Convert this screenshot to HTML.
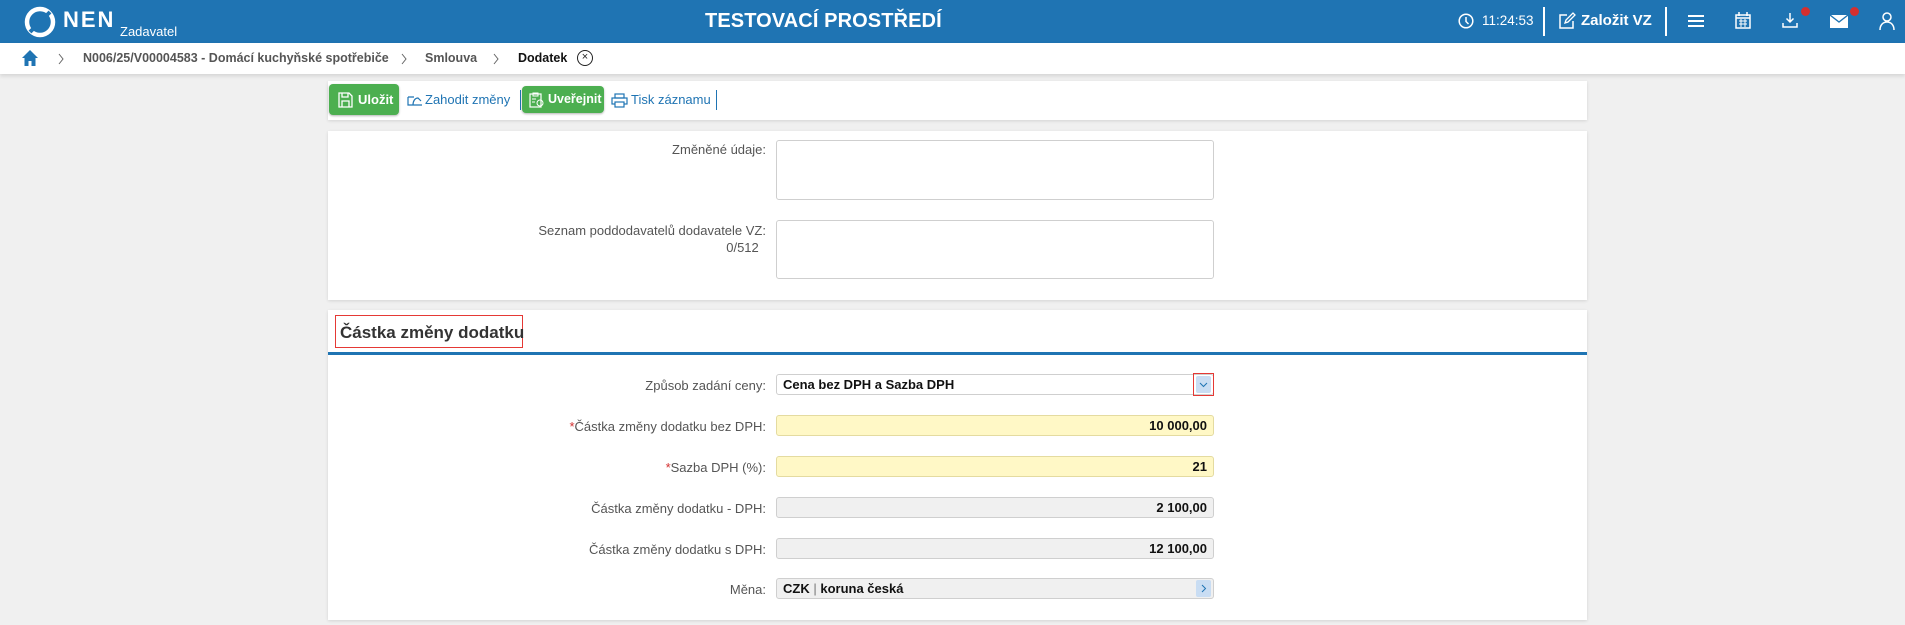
<!DOCTYPE html>
<html><head><meta charset="utf-8"><style>
*{box-sizing:border-box;margin:0;padding:0}
body{width:1905px;height:625px;overflow:hidden;background:#f0f0f0;font-family:"Liberation Sans",sans-serif;position:relative}
.abs{position:absolute;white-space:nowrap}
.hdr{left:0;top:0;width:1905px;height:43px;background:#1f74b3;color:#fff}
.bc{left:0;top:43px;width:1905px;height:31px;background:#fff;box-shadow:0 2px 4px rgba(0,0,0,.12);font-size:12.5px;font-weight:bold;color:#555}
.panel{background:#fff;box-shadow:0 1px 3px rgba(0,0,0,.12)}
.lbl{font-size:13px;color:#555;text-align:right;width:500px}
.inp{left:776px;width:438px;height:21px;border:1px solid #cfcfcf;border-radius:3px;font-size:13px;color:#111;padding:3px 6px;line-height:13px}
.y{background:#fff8c6;border-color:#e4dba0;text-align:right;font-weight:bold}
.g{background:#f0f0f0;text-align:right;font-weight:bold}
.btn{background:#4caf50;color:#fff;border-radius:4px;font-size:13px;font-weight:bold;box-shadow:0 1px 2px rgba(0,0,0,.3)}
.lnk{color:#1f74b3;font-size:13px}
.star{color:#d32f2f}
</style></head><body>
<div class="abs hdr">
  <svg class="abs" style="left:24px;top:6px" width="32" height="32" viewBox="0 0 32 32"><circle cx="16" cy="16" r="13" fill="none" stroke="#fff" stroke-width="4.5"/><path d="M6 26 L26 6" stroke="#1f74b3" stroke-width="4"/></svg>
  <div class="abs" style="left:63px;top:7px;font-size:22px;font-weight:bold;letter-spacing:2px">NEN</div>
  <div class="abs" style="left:120px;top:24px;font-size:13px">Zadavatel</div>
  <div class="abs" style="left:705px;top:10px;font-size:20px;font-weight:bold;letter-spacing:.1px">TESTOVACÍ PROSTŘEDÍ</div>
  <svg class="abs" style="left:1458px;top:13px" width="16" height="16" viewBox="0 0 16 16"><circle cx="8" cy="8" r="6.8" fill="none" stroke="#fff" stroke-width="1.5"/><path d="M8 4v4.5l2.5 2.5" fill="none" stroke="#fff" stroke-width="1.5"/></svg>
  <div class="abs" style="left:1482px;top:13px;font-size:13.5px">11:24:53</div>
  <div class="abs" style="left:1543px;top:7px;width:2px;height:29px;background:#fff"></div>
  <svg class="abs" style="left:1558px;top:12px" width="18" height="18" viewBox="0 0 18 18"><path d="M9 3H2v13h13V9" fill="none" stroke="#fff" stroke-width="1.5"/><path d="M7 11l1-3 7-7 2 2-7 7z" fill="none" stroke="#fff" stroke-width="1.3"/></svg>
  <div class="abs" style="left:1581px;top:12px;font-size:15px;font-weight:bold">Založit VZ</div>
  <div class="abs" style="left:1665px;top:7px;width:2px;height:29px;background:#fff"></div>
  <svg class="abs" style="left:1688px;top:14px" width="16" height="14"><path d="M0 2h16M0 7h16M0 12h16" stroke="#fff" stroke-width="2"/></svg>
  <svg class="abs" style="left:1735px;top:12px" width="16" height="17" viewBox="0 0 16 17"><rect x="1" y="3" width="14" height="13" fill="none" stroke="#fff" stroke-width="1.5"/><path d="M4 0v4M12 0v4M1 6h14" stroke="#fff" stroke-width="1.5"/><path d="M4 9h8M4 12h8M6 7v8M10 7v8" stroke="#fff" stroke-width="1"/></svg>
  <svg class="abs" style="left:1782px;top:12px" width="16" height="17" viewBox="0 0 16 17"><path d="M8 1v9M4.5 6.5 8 10l3.5-3.5" fill="none" stroke="#fff" stroke-width="1.5"/><path d="M1 11v4h14v-4" fill="none" stroke="#fff" stroke-width="1.5"/></svg>
  <div class="abs" style="left:1801px;top:7px;width:9px;height:9px;border-radius:50%;background:#d32f2f"></div>
  <svg class="abs" style="left:1830px;top:15px" width="18" height="13" viewBox="0 0 18 13"><rect width="18" height="13" fill="#fff"/><path d="M0 0l9 7 9-7" fill="none" stroke="#1f74b3" stroke-width="1.3"/></svg>
  <div class="abs" style="left:1850px;top:7px;width:9px;height:9px;border-radius:50%;background:#d32f2f"></div>
  <svg class="abs" style="left:1879px;top:12px" width="16" height="18" viewBox="0 0 16 18"><circle cx="8" cy="5" r="4" fill="none" stroke="#fff" stroke-width="1.5"/><path d="M1 18c0-5 3-8 7-8s7 3 7 8" fill="none" stroke="#fff" stroke-width="1.5"/></svg>
</div>
<div class="abs bc">
  <svg class="abs" style="left:21px;top:6px" width="18" height="17" viewBox="0 0 18 17"><path d="M9 1 1 9h2.5v8h4v-5h3v5h4V9H17z" fill="#1f74b3"/></svg>
  <svg class="abs" style="left:58px;top:10px" width="6" height="12"><path d="M1 1l4 5-4 5" fill="none" stroke="#666" stroke-width="1"/></svg>
  <div class="abs" style="left:83px;top:8px">N006/25/V00004583 - Domácí kuchyňské spotřebiče</div>
  <svg class="abs" style="left:401px;top:10px" width="6" height="12"><path d="M1 1l4 5-4 5" fill="none" stroke="#666" stroke-width="1"/></svg>
  <div class="abs" style="left:425px;top:8px">Smlouva</div>
  <svg class="abs" style="left:493px;top:10px" width="6" height="12"><path d="M1 1l4 5-4 5" fill="none" stroke="#666" stroke-width="1"/></svg>
  <div class="abs" style="left:518px;top:8px;color:#111">Dodatek</div>
  <div class="abs" style="left:577px;top:7px;width:16px;height:16px;border:1.3px solid #222;border-radius:50%;font-size:11px;line-height:13px;text-align:center;color:#222;font-weight:normal">×</div>
</div>
<div class="abs panel" style="left:328px;top:81px;width:1259px;height:39px">
  <div class="abs btn" style="left:1px;top:3px;width:70px;height:31px;padding:8px 0 0 29px">Uložit</div>
  <svg class="abs" style="left:10px;top:11px" width="15" height="16" viewBox="0 0 15 16"><path d="M1 1h10l3 3v11H1z M4 1v4h6V1 M4 15v-6h7v6" fill="none" stroke="#fff" stroke-width="1.3"/></svg>
  <svg class="abs" style="left:79px;top:13px" width="16" height="12" viewBox="0 0 16 12"><path d="M1 3v8h14 M1 3h6 M6 11c0-4 2-7 5-7l3 3" fill="none" stroke="#1f74b3" stroke-width="1.2"/></svg>
  <div class="abs lnk" style="left:97px;top:11px">Zahodit změny</div>
  <div class="abs" style="left:192px;top:9px;width:1px;height:20px;background:#1f74b3"></div>
  <div class="abs btn" style="left:194px;top:5px;width:82px;height:27px;padding:6px 0 0 26px;font-size:12.5px">Uveřejnit</div>
  <svg class="abs" style="left:201px;top:11px" width="15" height="16" viewBox="0 0 15 16"><rect x="1" y="2" width="11" height="13" fill="none" stroke="#fff" stroke-width="1.2"/><path d="M4 1h5v3H4z M3 7h4M3 10h3" stroke="#fff" fill="none"/><circle cx="11" cy="11" r="3" fill="none" stroke="#fff"/></svg>
  <svg class="abs" style="left:283px;top:12px" width="17" height="15" viewBox="0 0 17 15"><rect x="4" y="1" width="9" height="4" fill="none" stroke="#1f74b3" stroke-width="1.2"/><rect x="1" y="5" width="15" height="6" fill="none" stroke="#1f74b3" stroke-width="1.2"/><rect x="4" y="9" width="9" height="5" fill="#fff" stroke="#1f74b3" stroke-width="1.2"/></svg>
  <div class="abs lnk" style="left:303px;top:11px">Tisk záznamu</div>
  <div class="abs" style="left:388px;top:9px;width:1px;height:20px;background:#1f74b3"></div>
</div>
<div class="abs panel" style="left:328px;top:131px;width:1259px;height:169px"></div>
<div class="abs lbl" style="left:266px;top:142px">Změněné údaje:</div>
<div class="abs inp" style="top:140px;height:60px"></div>
<div class="abs lbl" style="left:266px;top:222px;line-height:17px">Seznam poddodavatelů dodavatele VZ:<br>0/512&nbsp;&nbsp;</div>
<div class="abs inp" style="top:220px;height:59px"></div>
<div class="abs panel" style="left:328px;top:310px;width:1259px;height:310px"></div>
<div class="abs" style="left:335px;top:315px;width:188px;height:33px;border:1px solid #e53935;font-size:17px;font-weight:bold;color:#333;padding:7px 0 0 4px">Částka změny dodatku</div>
<div class="abs" style="left:328px;top:352px;width:1259px;height:3px;background:#1f74b3"></div>
<div class="abs lbl" style="left:266px;top:378px">Způsob zadání ceny:</div>
<div class="abs inp" style="top:374px;font-weight:bold">Cena bez DPH a Sazba DPH</div>
<div class="abs" style="left:1193px;top:373px;width:21px;height:23px;border:1px solid #e53935"></div>
<div class="abs" style="left:1196px;top:376px;width:15px;height:17px;background:#c9ddf3;border-radius:2px"></div>
<svg class="abs" style="left:1199px;top:382px" width="9" height="6"><path d="M1 1l3.5 3.5L8 1" fill="none" stroke="#1f74b3" stroke-width="1"/></svg>
<div class="abs lbl" style="left:266px;top:419px"><span class="star">*</span>Částka změny dodatku bez DPH:</div>
<div class="abs inp y" style="top:415px">10 000,00</div>
<div class="abs lbl" style="left:266px;top:460px"><span class="star">*</span>Sazba DPH (%):</div>
<div class="abs inp y" style="top:456px">21</div>
<div class="abs lbl" style="left:266px;top:501px">Částka změny dodatku - DPH:</div>
<div class="abs inp g" style="top:497px">2 100,00</div>
<div class="abs lbl" style="left:266px;top:542px">Částka změny dodatku s DPH:</div>
<div class="abs inp g" style="top:538px">12 100,00</div>
<div class="abs lbl" style="left:266px;top:582px">Měna:</div>
<div class="abs inp" style="top:578px;background:#f0f0f0;font-weight:bold">CZK <span style="font-weight:normal;color:#777">|</span> koruna česká</div>
<div class="abs" style="left:1196px;top:580px;width:15px;height:17px;background:#c9ddf3;border-radius:2px"></div>
<svg class="abs" style="left:1201px;top:584px" width="6" height="9"><path d="M1 1l3.5 3.5L1 8" fill="none" stroke="#1f74b3" stroke-width="1"/></svg>
</body></html>
